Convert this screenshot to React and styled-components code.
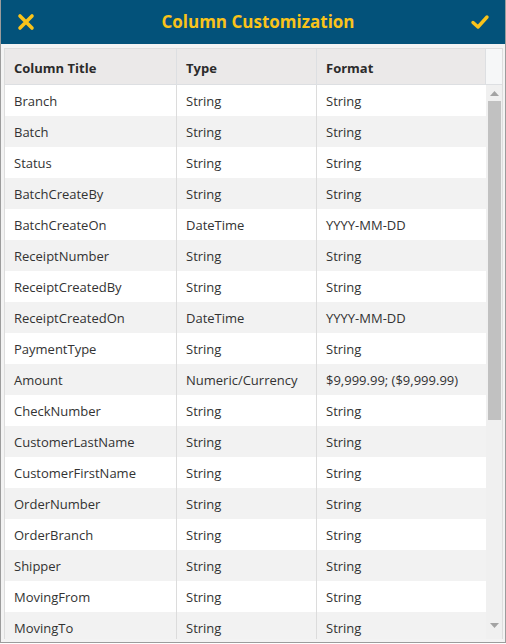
import React from "react";
import styled, { createGlobalStyle } from "styled-components";

const GlobalStyle = createGlobalStyle`
  html, body {
    margin: 0;
    padding: 0;
    background: #ffffff;
  }
  body {
    font-family: "Open Sans", "Noto Sans", sans-serif;
  }
`;

const Frame = styled.div`
  width: 506px;
  height: 643px;
  box-sizing: border-box;
  border: 1px solid #9c9c9c;
  border-top: none;
  display: flex;
  flex-direction: column;
  background: #f3f3f3;
  overflow: hidden;
`;

const TitleBar = styled.div`
  height: 44px;
  flex: none;
  background: #03527a;
  display: flex;
  align-items: center;
  justify-content: space-between;
  padding: 0 14px 0 14px;
`;

const Title = styled.h1`
  margin: 0 0 1px 10px;
  font-size: 17px;
  font-weight: 700;
  color: #f9c31a;
  letter-spacing: 0;
`;

const IconButton = styled.button`
  width: 22px;
  height: 22px;
  padding: 0;
  border: none;
  background: transparent;
  display: flex;
  align-items: center;
  justify-content: center;
  cursor: pointer;
`;

const Body = styled.div`
  flex: 1;
  min-height: 0;
  padding: 4px 3px 3px 3px;
  display: flex;
`;

const Table = styled.div`
  flex: 1;
  min-height: 0;
  display: flex;
  flex-direction: column;
  border: 1px solid #dddddd;
  border-bottom: none;
  background: #ffffff;
`;

const HeadRow = styled.div`
  display: grid;
  grid-template-columns: 172px 140px 169px 16px;
  height: 35px;
  flex: none;
  border-bottom: 1px solid #dddfe2;
  background: #ebe9e9;
`;

const HeadCell = styled.div`
  display: flex;
  align-items: center;
  padding: 2px 0 0 9px;
  font-size: 13px;
  font-weight: 700;
  color: #2b2b2b;
  border-right: 1px solid ${(p) => (p.$last ? "transparent" : "#dddfe2")};
  background: ${(p) => (p.$gutter ? "#f6f7f8" : "transparent")};
`;

const Scroller = styled.div`
  flex: 1;
  min-height: 0;
  display: flex;
  overflow: hidden;
  background: #f2f2f2;
`;

const Rows = styled.div`
  flex: 1;
  overflow: hidden;
`;

const Row = styled.div`
  display: grid;
  grid-template-columns: 172px 140px 169px;
  height: 31px;
  background: ${(p) => (p.$alt ? "#f2f2f2" : "#ffffff")};
`;

const Cell = styled.div`
  display: flex;
  align-items: center;
  padding-left: 9px;
  font-size: 13px;
  color: #333333;
  white-space: nowrap;
  border-right: ${(p) => (p.$last ? "none" : "1px solid #dcdcdc")};
`;

const Track = styled.div`
  width: 16px;
  flex: none;
  background: #f0f0f0;
  display: flex;
  flex-direction: column;
  align-items: center;
`;

const Arrow = styled.div`
  height: 16px;
  flex: none;
  display: flex;
  align-items: ${(p) => (p.$down ? "flex-start" : "center")};
  justify-content: center;
`;

const Thumb = styled.div`
  width: 13px;
  height: 319px;
  background: #c1c1c1;
  flex: none;
`;

const TrackFill = styled.div`
  flex: 1;
`;

const rows = [
  ["Branch", "String", "String"],
  ["Batch", "String", "String"],
  ["Status", "String", "String"],
  ["BatchCreateBy", "String", "String"],
  ["BatchCreateOn", "DateTime", "YYYY-MM-DD"],
  ["ReceiptNumber", "String", "String"],
  ["ReceiptCreatedBy", "String", "String"],
  ["ReceiptCreatedOn", "DateTime", "YYYY-MM-DD"],
  ["PaymentType", "String", "String"],
  ["Amount", "Numeric/Currency", "$9,999.99; ($9,999.99)"],
  ["CheckNumber", "String", "String"],
  ["CustomerLastName", "String", "String"],
  ["CustomerFirstName", "String", "String"],
  ["OrderNumber", "String", "String"],
  ["OrderBranch", "String", "String"],
  ["Shipper", "String", "String"],
  ["MovingFrom", "String", "String"],
  ["MovingTo", "String", "String"],
];

const CloseIcon = () => (
  <svg width="18" height="18" viewBox="0 0 18 18">
    <path d="M3 3 L15 15 M15 3 L3 15" stroke="#f9c31a" strokeWidth="3.6" strokeLinecap="round" />
  </svg>
);

const CheckIcon = () => (
  <svg width="20" height="18" viewBox="0 0 20 18">
    <path d="M3 9.5 L8 14 L17 4" stroke="#f9c31a" strokeWidth="3.4" fill="none" strokeLinecap="round" strokeLinejoin="round" />
  </svg>
);

const ArrowGlyph = ({ down }) => (
  <svg width="9" height="5" viewBox="0 0 9 5">
    <path d={down ? "M0 0 L9 0 L4.5 5 Z" : "M0 5 L9 5 L4.5 0 Z"} fill="#a3a3a3" />
  </svg>
);

const App = () => {
  return (
    <>
      <GlobalStyle />
      <Frame>
        <TitleBar>
          <IconButton aria-label="Close">
            <CloseIcon />
          </IconButton>
          <Title>Column Customization</Title>
          <IconButton aria-label="Apply">
            <CheckIcon />
          </IconButton>
        </TitleBar>
        <Body>
          <Table>
            <HeadRow>
              <HeadCell>Column Title</HeadCell>
              <HeadCell>Type</HeadCell>
              <HeadCell>Format</HeadCell>
              <HeadCell $gutter $last />
            </HeadRow>
            <Scroller>
              <Rows>
                {rows.map((r, i) => (
                  <Row key={r[0]} $alt={i % 2 === 1}>
                    <Cell>{r[0]}</Cell>
                    <Cell>{r[1]}</Cell>
                    <Cell $last>{r[2]}</Cell>
                  </Row>
                ))}
              </Rows>
              <Track>
                <Arrow>
                  <ArrowGlyph />
                </Arrow>
                <Thumb />
                <TrackFill />
                <Arrow $down>
                  <ArrowGlyph down />
                </Arrow>
              </Track>
            </Scroller>
          </Table>
        </Body>
      </Frame>
    </>
  );
};

export default App;
